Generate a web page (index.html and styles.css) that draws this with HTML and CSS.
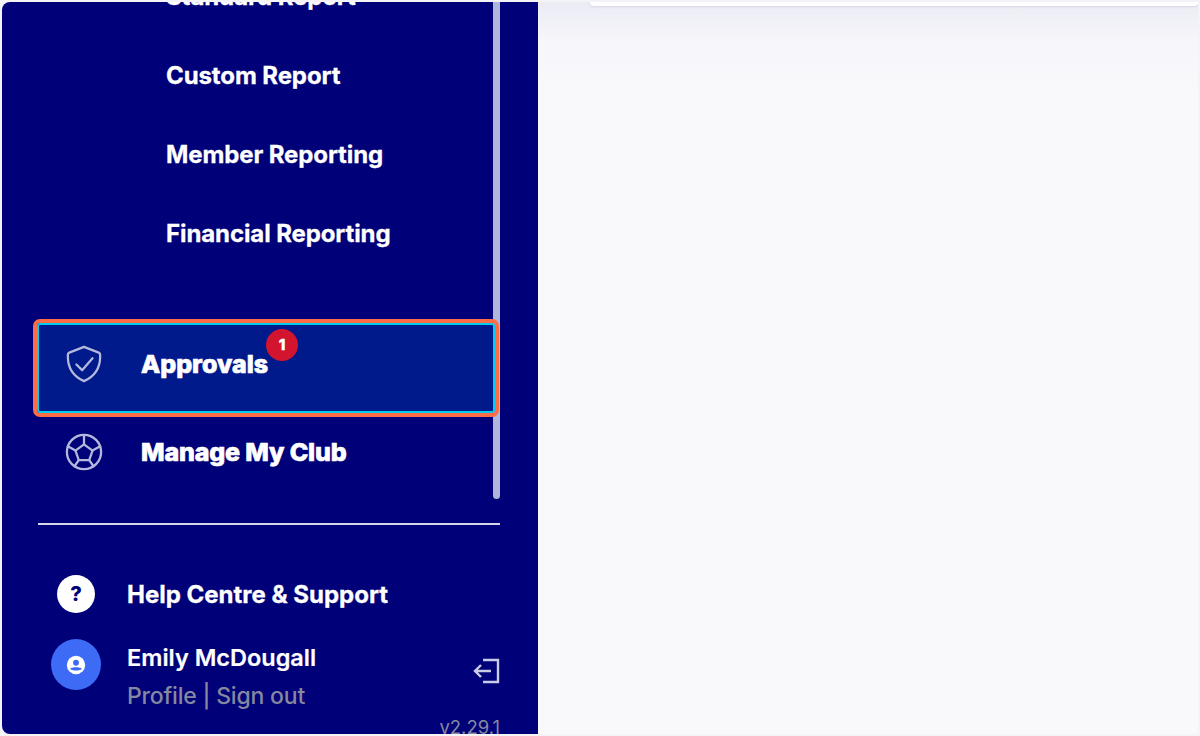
FILE: index.html
```html
<!DOCTYPE html>
<html lang="en">
<head>
  <meta charset="UTF-8" />
  <title>Approvals</title>
  <link rel="stylesheet" href="styles.css">
</head>
<body>

<div class="app">
  <aside class="sidebar">
    <div class="scrollbar"></div>

    <!-- scrolled menu -->
    <nav class="menu">
      <a class="sub-item">Standard Report</a>
      <a class="sub-item">Custom Report</a>
      <a class="sub-item">Member Reporting</a>
      <a class="sub-item">Financial Reporting</a>

      <a class="main-item active">
        <svg class="item-icon" viewBox="0 0 40 40" fill="none" stroke="#b4b9dc" stroke-width="2.4" stroke-linecap="round" stroke-linejoin="round">
          <path d="M20 2 L35.5 8 C37.5 9 37 10 37 12 C37 24 31 33 20 38 C9 33 3 24 3 12 C3 10 2.5 9 4.5 8 Z"/>
          <path d="M12 20.5 L18 26.5 L29 14"/>
        </svg>
        <span class="item-label">Approvals</span>
        <span class="badge">1</span>
      </a>

      <a class="main-item">
        <svg class="item-icon" viewBox="0 0 40 40" fill="none" stroke="#b4b9dc" stroke-width="2.4" stroke-linecap="round" stroke-linejoin="round">
          <circle cx="20" cy="20" r="18"/>
          <path d="M20 12 L29 18.5 L25.5 28.5 L14.5 28.5 L11 18.5 Z"/>
          <path d="M20 12 V3 M29 18.5 L37 14 M25.5 28.5 L30 35 M14.5 28.5 L10 35 M11 18.5 L3 14"/>
        </svg>
        <span class="item-label">Manage My Club</span>
      </a>
    </nav>

    <div class="sidebar-bottom">
      <a class="help-row">
        <span class="help-icon">?</span>
        <span class="help-label">Help Centre &amp; Support</span>
      </a>

      <div class="user-row">
        <span class="avatar">
          <svg viewBox="0 0 24 24" width="22" height="22">
            <circle cx="12" cy="12" r="10" fill="#fff"/>
            <circle cx="12" cy="9.5" r="3.2" fill="#3d6bf5"/>
            <path d="M5.5 16 C7.5 13.8 16.5 13.8 18.5 16 C17 18.6 7 18.6 5.5 16 Z" fill="#3d6bf5"/>
          </svg>
        </span>
        <div class="user-text">
          <div class="user-name">Emily McDougall</div>
          <div class="user-links">Profile | Sign out</div>
        </div>
        <svg class="logout" viewBox="0 0 28 26" fill="none" stroke="#c9cce6" stroke-width="2.4">
          <path d="M11 2 H26 V24 H11"/>
          <path d="M19 13 H3 M9 7 L3 13 L9 19"/>
        </svg>
      </div>

      <div class="version">v2.29.1</div>
    </div>
  </aside>

  <main class="content">
    <div class="top-card"></div>
  </main>
</div>

</body>
</html>
```

FILE: styles.css
```css
* {
  box-sizing: border-box;
}

html, body {
  height: 100%;
}

body {
  margin: 0;
  background: #f3f3f8;
  font-family: "Inter", "Noto Sans", Arial, sans-serif;
  overflow: hidden;
}

.app {
  display: flex;
  height: 736px;
  padding: 2px 0 2px 2px;
}

.sidebar {
  position: relative;
  width: 536px;
  flex-shrink: 0;
  display: flex;
  flex-direction: column;
  background: #000078;
  border-radius: 8px 0 0 8px;
  overflow: hidden;
  color: #fff;
}

.scrollbar {
  position: absolute;
  top: 0;
  left: 491px;
  width: 7px;
  height: 497px;
  background: #b0b6db;
  border-radius: 0 0 4px 4px;
}

.menu {
  position: relative;
  height: 521px;
  flex-shrink: 0;
  overflow: hidden;
  padding: 4px 43px 0 35px;
}

.sub-item {
  display: flex;
  align-items: center;
  height: 79px;
  padding-left: 129px;
  font-size: 24px;
  font-weight: 700;
  letter-spacing: -0.1px;
  -webkit-text-stroke: 0.3px #fff;
}

.sub-item:first-child {
  margin-top: -49px;
}

.main-item {
  display: flex;
  align-items: center;
  position: relative;
  height: 78px;
  padding-left: 28px;
  font-size: 25px;
  font-weight: 800;
  letter-spacing: -0.15px;
}

.main-item.active {
  margin-top: 50px;
  height: 90px;
  background: #001a8c;
  border: 2px solid #00cdf0;
  outline: 4px solid #ff6b45;
  border-radius: 3px;
  padding-left: 26px;
  padding-bottom: 8px;
  letter-spacing: 0;
}

.item-icon {
  width: 38px;
  height: 38px;
  flex-shrink: 0;
}

.item-label {
  margin-left: 38px;
  -webkit-text-stroke: 0.7px #fff;
}

.badge {
  position: absolute;
  top: 4px;
  left: 227px;
  width: 32px;
  height: 32px;
  border-radius: 50%;
  background: #d2142f;
  font-size: 15px;
  font-weight: 800;
  text-align: center;
  line-height: 32px;
  -webkit-text-stroke: 0.4px #fff;
}

.sidebar-bottom {
  flex: 1;
  margin: 0 38px 0 36px;
  padding-top: 2px;
  border-top: 2px solid #d5d6ea;
}

.help-row {
  display: flex;
  align-items: center;
  margin-top: 48px;
  padding-left: 19px;
}

.help-icon {
  width: 38px;
  height: 38px;
  border-radius: 50%;
  background: #fff;
  color: #000078;
  font-size: 20px;
  font-weight: 800;
  text-align: center;
  line-height: 38px;
}

.help-label {
  margin-left: 32px;
  font-size: 24px;
  font-weight: 700;
  -webkit-text-stroke: 0.3px #fff;
}

.user-row {
  display: flex;
  align-items: flex-start;
  margin-top: 26px;
  padding-left: 13px;
}

.avatar {
  display: flex;
  align-items: center;
  justify-content: center;
  width: 50px;
  height: 51px;
  border-radius: 50%;
  background: #3d6bf5;
  flex-shrink: 0;
}

.user-text {
  margin-left: 26px;
  flex: 1;
}

.user-name {
  font-size: 23.5px;
  font-weight: 600;
  line-height: 30px;
  margin-top: 4px;
  -webkit-text-stroke: 0.2px #fff;
}

.user-links {
  margin-top: 8px;
  font-size: 23px;
  font-weight: 500;
  letter-spacing: -0.2px;
  line-height: 30px;
  color: #85889f;
}

.logout {
  width: 28px;
  height: 26px;
  margin-top: 19px;
}

.version {
  margin-top: 4px;
  text-align: right;
  font-size: 18.5px;
  line-height: 24px;
  color: #85889f;
}

.content {
  flex: 1;
  background: linear-gradient(#ebebf4, #f6f6fb 40px, #f9f9fc 90px);
  margin-right: 2px;
  overflow: hidden;
}

.top-card {
  height: 4px;
  margin-left: 52px;
  background: #fff;
  border-radius: 0 0 4px 4px;
  box-shadow: 0 1px 2px #d8d8e6;
}
```
